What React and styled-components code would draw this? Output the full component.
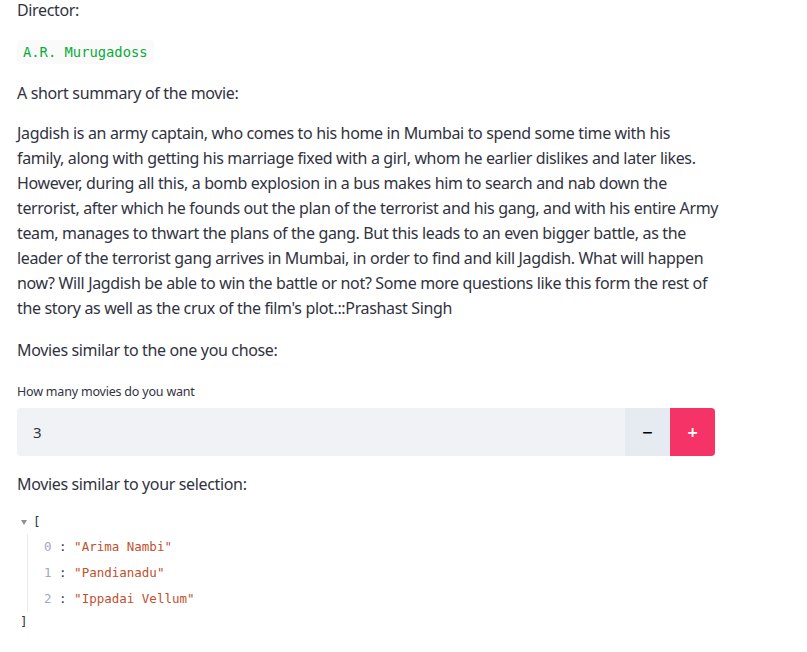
import React from 'react';
import styled, { createGlobalStyle } from 'styled-components';

const GlobalStyle = createGlobalStyle`
  body {
    margin: 0;
    background: #ffffff;
    font-family: "Noto Sans", "Open Sans", sans-serif;
    color: #31333f;
  }
`;

const Page = styled.div`
  width: 698px;
  padding-left: 17px;
  display: flex;
  flex-direction: column;
`;

const Text = styled.p`
  margin: ${props => props.$margin || '0'};
  font-size: 16px;
  line-height: ${props => props.$lh || '25px'};
  letter-spacing: -0.35px;
  color: #31333f;
`;

const Line = styled.span`
  display: block;
  white-space: nowrap;
`;

const CodeChip = styled.div`
  align-self: flex-start;
  margin: ${props => props.$margin || '0'};
  padding: 0 6px;
  height: 24px;
  line-height: 24px;
  background: #fafafa;
  border-radius: 4px;
  font-family: "DejaVu Sans Mono", "Liberation Mono", monospace;
  font-size: 13.8px;
  color: #09ab3b;
`;

const Label = styled.label`
  margin-top: 19px;
  font-size: 12.5px;
  line-height: 20px;
  letter-spacing: -0.2px;
  color: #31333f;
`;

const InputRow = styled.div`
  margin-top: 6px;
  display: flex;
  height: 48px;
`;

const Field = styled.div`
  flex: 1;
  background: #f0f2f6;
  border-radius: 4px 0 0 4px;
  display: flex;
  align-items: center;
  padding-left: 16px;
  font-size: 15px;
  color: #31333f;
`;

const StepButton = styled.button`
  width: 45px;
  border: none;
  padding: 0;
  display: flex;
  align-items: center;
  justify-content: center;
  background: ${props => (props.$primary ? '#f63366' : '#e6eaf1')};
  border-radius: ${props => (props.$primary ? '0 4px 4px 0' : '0')};
  color: ${props => (props.$primary ? '#ffffff' : '#000000')};
  font-family: "DejaVu Sans", sans-serif;
  font-weight: 700;
  font-size: 14px;
`;

const Json = styled.div`
  margin-top: 12px;
  font-family: "DejaVu Sans Mono", "Liberation Mono", monospace;
  font-size: 12.5px;
  line-height: 26px;
  color: #31333f;
`;

const Bracket = styled.div`
  display: flex;
  align-items: center;
  height: 26px;
  margin-top: ${props => (props.$open ? '0' : '-3px')};
  padding-left: ${props => (props.$open ? '0' : '3px')};
`;

const Caret = styled.span`
  width: 0;
  height: 0;
  margin: 0 6px 0 4px;
  border-left: 3.5px solid transparent;
  border-right: 3.5px solid transparent;
  border-top: 5px solid #8d8f99;
`;

const Items = styled.div`
  margin: -1px 0 0 10px;
  padding-left: 16px;
  border-left: 1px solid #ebebeb;
`;

const Item = styled.div`
  height: 26px;
  display: flex;
  align-items: center;
  white-space: pre;
`;

const Index = styled.span`
  color: #a4a6c4;
`;

const Str = styled.span`
  color: #c0512d;
`;

const summary = [
  'Jagdish is an army captain, who comes to his home in Mumbai to spend some time with his',
  'family, along with getting his marriage fixed with a girl, whom he earlier dislikes and later likes.',
  'However, during all this, a bomb explosion in a bus makes him to search and nab down the',
  'terrorist, after which he founds out the plan of the terrorist and his gang, and with his entire Army',
  'team, manages to thwart the plans of the gang. But this leads to an even bigger battle, as the',
  'leader of the terrorist gang arrives in Mumbai, in order to find and kill Jagdish. What will happen',
  'now? Will Jagdish be able to win the battle or not? Some more questions like this form the rest of',
  "the story as well as the crux of the film's plot.::Prashast Singh",
];

const movies = ['Arima Nambi', 'Pandianadu', 'Ippadai Vellum'];

export default function App() {
  return (
    <>
      <GlobalStyle />
      <Page>
        <Text $lh="20px">Director:</Text>
        <CodeChip $margin="20px 0 0 0">A.R. Murugadoss</CodeChip>
        <Text $margin="17px 0 0 0">A short summary of the movie:</Text>
        <Text $margin="15px 0 0 0">
          {summary.map(l => (
            <Line key={l}>{l}</Line>
          ))}
        </Text>
        <Text $margin="17px 0 0 0">Movies similar to the one you chose:</Text>
        <Label>How many movies do you want</Label>
        <InputRow>
          <Field>3</Field>
          <StepButton>−</StepButton>
          <StepButton $primary>+</StepButton>
        </InputRow>
        <Text $margin="16px 0 0 0">Movies similar to your selection:</Text>
        <Json>
          <Bracket $open>
            <Caret />[
          </Bracket>
          <Items>
            {movies.map((m, i) => (
              <Item key={m}>
                <Index>{i}</Index> : <Str>"{m}"</Str>
              </Item>
            ))}
          </Items>
          <Bracket>]</Bracket>
        </Json>
      </Page>
    </>
  );
}
